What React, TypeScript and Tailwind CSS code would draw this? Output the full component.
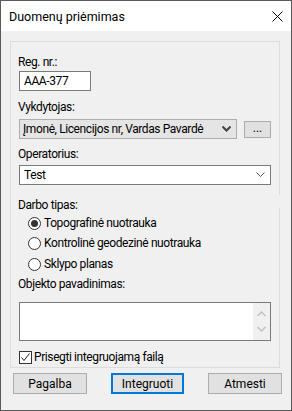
import React from "react";

const font = { fontFamily: 'Roboto, "Liberation Sans", Arial, sans-serif' };

function Chevron({ className = "" }: { className?: string }) {
  return (
    <svg width="9" height="6" viewBox="0 0 9 6" className={className}>
      <path d="M0.5 0.5 L4.5 4.5 L8.5 0.5" fill="none" stroke="currentColor" strokeWidth="1" />
    </svg>
  );
}

export default function App() {
  return (
    <div
      className="w-[292px] h-[411px] border border-[#5a5a5a] bg-[#f0f0f0] flex flex-col text-[12px] text-black leading-[16px]"
      style={font}
    >
      {/* Title bar */}
      <div className="h-[30px] bg-white flex items-center justify-between pl-[8px] pr-[8px] shrink-0">
        <span className="text-[12.5px] mt-[1px]">Duomenų priėmimas</span>
        <svg width="11" height="11" viewBox="0 0 11 11" className="mt-[1px]">
          <path d="M0.5 0.5 L10.5 10.5 M10.5 0.5 L0.5 10.5" stroke="#000" strokeWidth="1" />
        </svg>
      </div>

      {/* Body */}
      <div className="flex-1 flex flex-col pt-[10px] pl-[9px]">
        <div className="relative w-[270px] h-[327px] border border-[#dcdcdc] pl-[7px] flex flex-col tracking-[-0.4px]">
          <div className="absolute right-[-1px] top-[153px] w-[1px] h-[13px] bg-[#f0f0f0]" />
          <div className="mt-[12px] h-[16px]">Reg. nr.:</div>
          <div className="mt-[1px] ml-[1px] w-[72px] h-[20px] bg-white border border-[#7a7a7a] pl-[4px] flex items-center">
            AAA-377
          </div>

          <div className="mt-[8px] h-[16px]">Vykdytojas:</div>
          <div className="mt-[4px] ml-[1px] flex items-center">
            <div className="w-[218px] h-[20px] bg-[#e5e5e5] border border-[#adadad] pl-[3px] pr-[5px] flex items-center justify-between">
              <span>Įmonė, Licencijos nr, Vardas Pavardė</span>
              <svg width="9" height="6" viewBox="0 0 9 6">
                <path d="M0.5 0.5 L4.5 4.5 L8.5 0.5" fill="none" stroke="#444" strokeWidth="2" />
              </svg>
            </div>
            <div className="ml-[7px] w-[27px] h-[17px] bg-[#e1e1e1] border border-[#adadad] flex items-center justify-center text-[#000] leading-[10px] pb-[3px] tracking-normal">
              ...
            </div>
          </div>

          <div className="mt-[7px] h-[16px]">Operatorius:</div>
          <div className="mt-[3px] ml-[1px] w-[252px] h-[20px] bg-white border border-[#7a7a7a] pl-[4px] pr-[5px] flex items-center justify-between">
            <span>Test</span>
            <Chevron className="text-[#555]" />
          </div>

          <div className="mt-[12px] h-[16px]">Darbo tipas:</div>
          <div className="flex flex-col ml-[10px]">
            {[
              ["Topografinė nuotrauka", true],
              ["Kontrolinė geodezinė nuotrauka", false],
              ["Sklypo planas", false],
            ].map(([label, checked], i) => (
              <div key={i} className={`h-[20px] flex items-center ${i === 2 ? "mt-[1px]" : ""}`}>
                <div className="w-[13px] h-[13px] rounded-full border border-[#333] bg-white flex items-center justify-center">
                  {checked ? <div className="w-[7px] h-[7px] rounded-full bg-[#333]" /> : null}
                </div>
                <span className="ml-[3px]">{label as string}</span>
              </div>
            ))}
          </div>

          <div className="mt-[2px] h-[16px]">Objekto pavadinimas:</div>
          <div className="mt-[10px] ml-[1px] w-[252px] h-[39px] bg-white border border-[#7a7a7a] flex justify-end">
            <div className="w-[17px] h-full bg-[#f0f0f0] flex flex-col items-center justify-between py-[8px]">
              <svg width="9" height="6" viewBox="0 0 9 6">
                <path d="M0.5 5 L4.5 1 L8.5 5" fill="none" stroke="#c0c0c0" strokeWidth="1.5" />
              </svg>
              <svg width="9" height="6" viewBox="0 0 9 6">
                <path d="M0.5 1 L4.5 5 L8.5 1" fill="none" stroke="#c0c0c0" strokeWidth="1.5" />
              </svg>
            </div>
          </div>

          <div className="mt-[8px] ml-[1px] h-[16px] flex items-center">
            <div className="w-[13px] h-[13px] border border-[#333] bg-white flex items-center justify-center">
              <svg width="11" height="11" viewBox="0 0 11 11">
                <path d="M1.5 5.5 L4 8.5 L9.5 1.5" fill="none" stroke="#222" strokeWidth="1" />
              </svg>
            </div>
            <span className="ml-[2px]">Prisegti integruojamą failą</span>
          </div>
        </div>

        <div className="mt-[5px] ml-[3px] w-[269px] flex justify-between">
          <div className="w-[74px] h-[21px] bg-[#e1e1e1] border border-[#adadad] flex items-center justify-center">
            Pagalba
          </div>
          <div className="w-[73px] h-[21px] bg-[#e1e1e1] border-2 border-[#0078d7] flex items-center justify-center">
            Integruoti
          </div>
          <div className="w-[74px] h-[21px] bg-[#e1e1e1] border border-[#adadad] flex items-center justify-center">
            Atmesti
          </div>
        </div>
      </div>
    </div>
  );
}
